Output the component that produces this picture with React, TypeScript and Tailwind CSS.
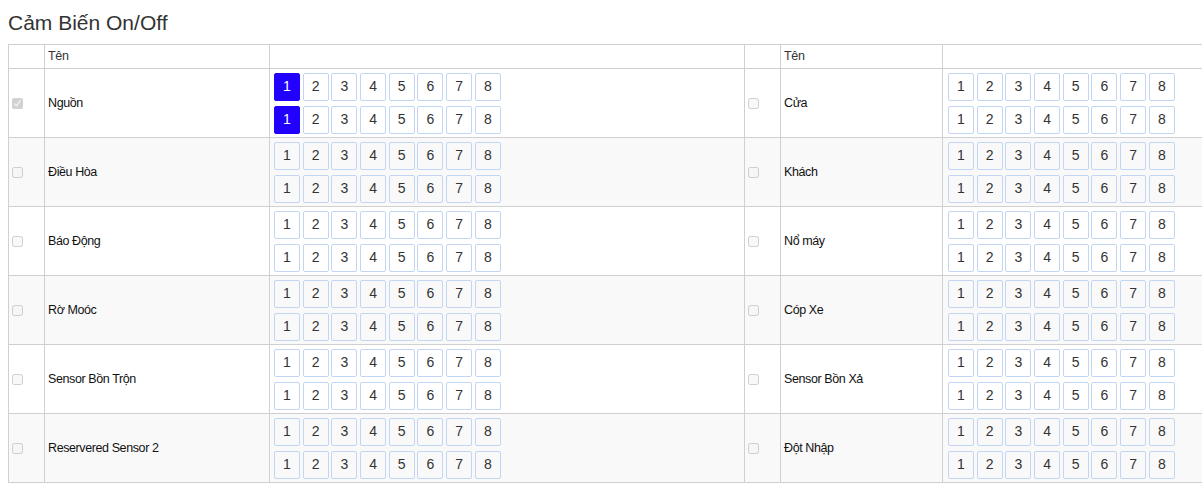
import React from "react";

const left = ["Nguồn", "Điều Hòa", "Báo Động", "Rờ Moóc", "Sensor Bồn Trộn", "Reservered Sensor 2"];
const right = ["Cửa", "Khách", "Nổ máy", "Cóp Xe", "Sensor Bồn Xả", "Đột Nhập"];
const nums = [1, 2, 3, 4, 5, 6, 7, 8];

function BtnRow({ active }: { active: boolean }) {
  return (
    <div className="flex gap-[2.7px]">
      {nums.map((n) => (
        <span
          key={n}
          className={
            n === 1 && active
              ? "flex w-[26px] h-[28px] items-center justify-center border border-[#2200ff] bg-[#2200ff] rounded-[2px] text-[14px] text-white"
              : "flex w-[26px] h-[28px] items-center justify-center border border-[#c2d6f4] rounded-[2px] text-[14px] text-[#333]"
          }
        >
          {n}
        </span>
      ))}
    </div>
  );
}

function Cells({ name, checked, active, striped, right }: { name: string; checked: boolean; active: boolean; striped: boolean; right?: boolean }) {
  const bg = striped ? "bg-[#f9f9f9]" : "bg-white";
  return (
    <>
      <div className={`h-[69px] border-r border-b border-[#d0d0d0] ${bg} flex items-center pl-[3px]`}>
        <input type="checkbox" disabled defaultChecked={checked} className="w-[11px] h-[11px] m-0" />
      </div>
      <div className={`h-[69px] border-r border-b border-[#d0d0d0] ${bg} flex items-center pl-[3px] text-[12.5px] tracking-[-0.4px] text-[#111]`}>
        {name}
      </div>
      <div className={`h-[69px] border-r border-b border-[#d0d0d0] ${bg} flex flex-col justify-center gap-[5px] ${right ? "pl-[5px]" : "pl-[4px]"}`}>
        <BtnRow active={active} />
        <BtnRow active={active} />
      </div>
    </>
  );
}

export default function App() {
  return (
    <div className="w-full h-[485px] overflow-hidden bg-white font-['Liberation_Sans',Arial,sans-serif]">
      <h1 className="ml-[8px] mt-[11px] text-[21px] leading-[24px] text-[#333]">Cảm Biến On/Off</h1>
      <div className="mt-[9px] ml-[8px] grid grid-cols-[36px_225px_475px_36px_162px_475px] w-max border-l border-t border-[#d0d0d0]">
        <div className="h-[24px] border-r border-b border-[#d0d0d0]" />
        <div className="h-[24px] border-r border-b border-[#d0d0d0] pl-[3px] text-[12.5px] leading-[23px] tracking-[-0.3px] text-[#333]">Tên</div>
        <div className="h-[24px] border-r border-b border-[#d0d0d0]" />
        <div className="h-[24px] border-r border-b border-[#d0d0d0]" />
        <div className="h-[24px] border-r border-b border-[#d0d0d0] pl-[3px] text-[12.5px] leading-[23px] tracking-[-0.3px] text-[#333]">Tên</div>
        <div className="h-[24px] border-r border-b border-[#d0d0d0]" />
        {left.map((l, i) => (
          <React.Fragment key={l}>
            <Cells name={l} checked={i === 0} active={i === 0} striped={i % 2 === 1} />
            <Cells name={right[i]} checked={false} active={false} striped={i % 2 === 1} right />
          </React.Fragment>
        ))}
      </div>
    </div>
  );
}
